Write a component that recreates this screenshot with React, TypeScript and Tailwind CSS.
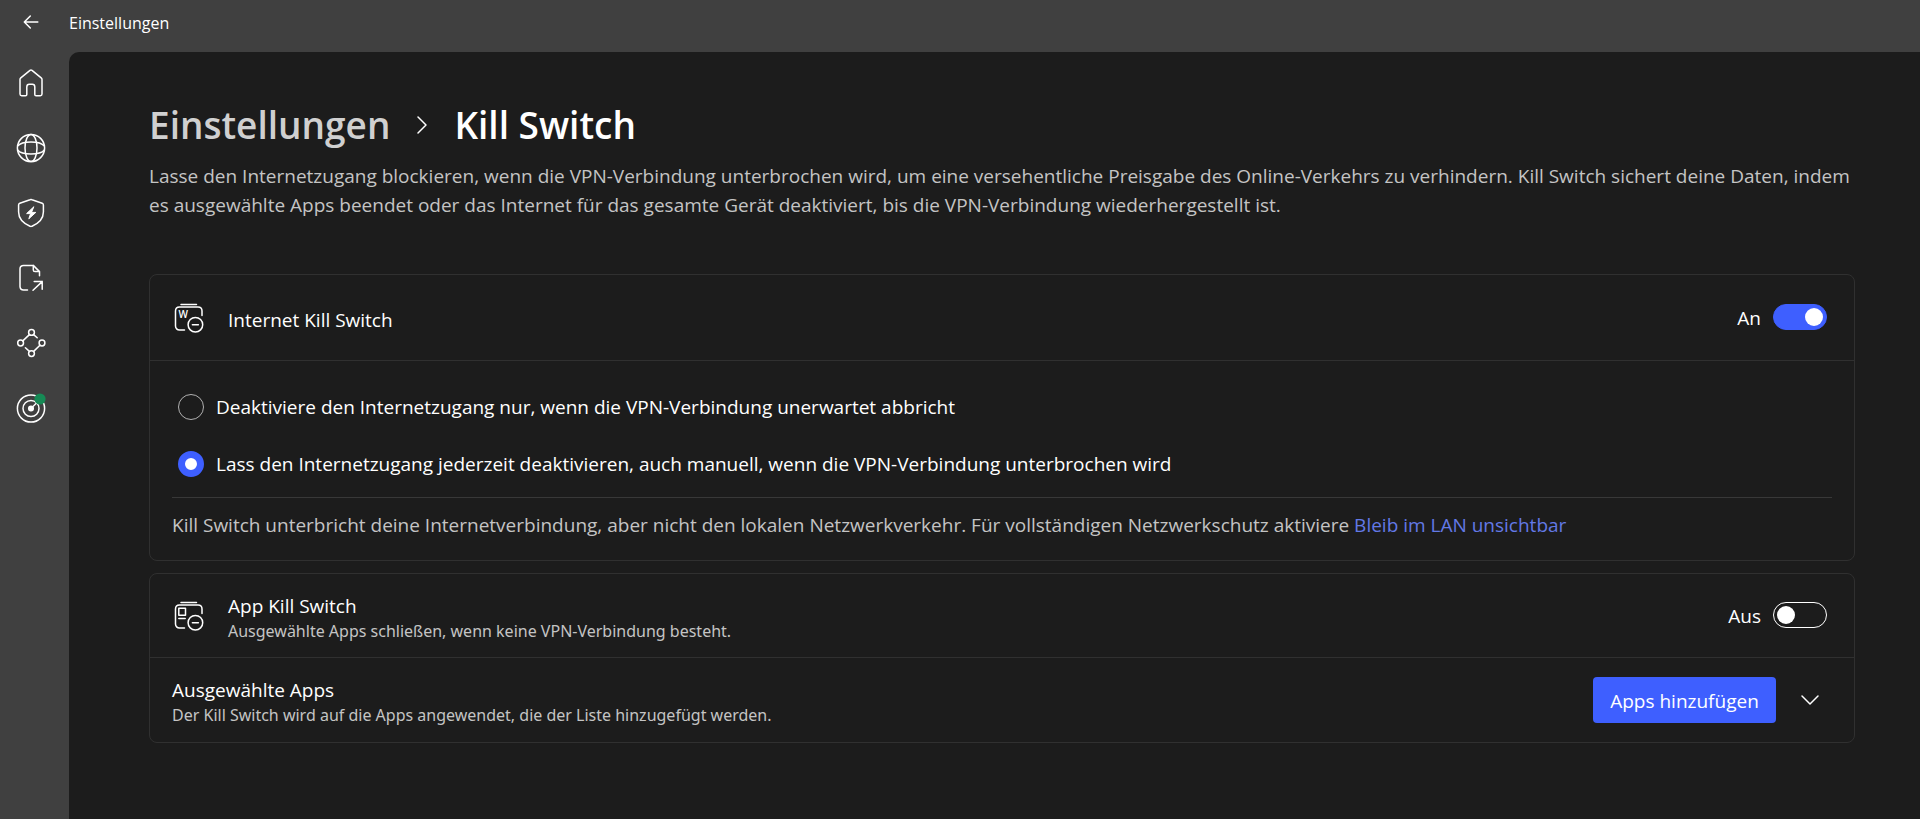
import React, { useState } from 'react';

interface IconProps {
  className?: string;
}

const stroke = {
  fill: 'none',
  stroke: 'currentColor',
  strokeWidth: 1.5,
  strokeLinecap: 'round' as const,
  strokeLinejoin: 'round' as const,
};

const BackIcon: React.FC<IconProps> = ({ className }) => (
  <svg viewBox="0 0 16 16" className={className} {...stroke}>
    <path d="M14.8 8H1.5M7.3 2 1.3 8l6 6" />
  </svg>
);

const HomeIcon: React.FC<IconProps> = ({ className }) => (
  <svg viewBox="0 0 30 30" className={className} {...stroke}>
    <path d="M14 2.4 4.8 9.9Q4 10.6 4 11.6V26c0 1 .7 1.7 1.7 1.7h3.8c.8 0 1.3-.5 1.3-1.3v-7.5c0-1.7.9-2.7 2.5-2.7h3c1.6 0 2.5 1 2.5 2.7v7.5c0 .8.5 1.3 1.3 1.3h4.2c1 0 1.7-.7 1.7-1.7V11.6Q26 10.6 25.2 9.9L16 2.4Q15 1.6 14 2.4Z" />
  </svg>
);

const GlobeIcon: React.FC<IconProps> = ({ className }) => (
  <svg viewBox="0 0 30 30" className={className} {...stroke}>
    <circle cx="15" cy="15" r="13.6" />
    <ellipse cx="15" cy="15" rx="6" ry="13.6" />
    <path d="M1.6 13C4 10 9 8.9 15 8.9S26 10 28.4 13M1.6 17C4 20 9 21.1 15 21.1S26 20 28.4 17" />
  </svg>
);

const ShieldIcon: React.FC<IconProps> = ({ className }) => (
  <svg viewBox="0 0 30 30" className={className} {...stroke}>
    <path d="M14 1.7Q15 1.3 16 1.7L26.2 5.2Q27.4 5.6 27.4 6.9V14c0 6.5-3.6 10.8-11.4 14.2Q15 28.7 14 28.2C6.2 24.8 2.6 20.5 2.6 14V6.9Q2.6 5.6 3.8 5.2Z" />
    <path d="M17.6 9 10.6 15.6h4L12.8 20.8 19.8 14.4h-4Z" fill="currentColor" strokeWidth="1" />
  </svg>
);

const FileShareIcon: React.FC<IconProps> = ({ className }) => (
  <svg viewBox="0 0 30 30" className={className} {...stroke}>
    <path d="M11.5 27H7.5C5.4 27 4 25.7 4 23.6V5.8c0-2 1.4-3.4 3.5-3.4h9.8L23.5 8.6v4.2" />
    <path d="M17.3 2.6v4.3c0 1.1.6 1.7 1.7 1.7h4.3" />
    <path d="M17 27.2 26.2 18.6M18.2 18.5h8v7.8" />
  </svg>
);

const MeshIcon: React.FC<IconProps> = ({ className }) => (
  <svg viewBox="0 0 30 30" className={className} {...stroke}>
    <circle cx="15.5" cy="4.4" r="2.9" />
    <circle cx="4.6" cy="15" r="2.9" />
    <circle cx="26" cy="15" r="2.9" />
    <circle cx="15.5" cy="25.6" r="2.9" />
    <path d="M13.4 6.6 6.8 12.9M17.6 6.6l3.6 3.2M23.9 17.2l-6.2 6.2M13.4 23.4l-4-3.6" />
  </svg>
);

const TargetIcon: React.FC<IconProps> = ({ className }) => (
  <svg viewBox="0 0 30 30" className={className} {...stroke}>
    <circle cx="15" cy="15.5" r="13.6" />
    <circle cx="15" cy="15.5" r="8" />
    <circle cx="15" cy="15.5" r="2.3" fill="currentColor" />
    <path d="M16 14.5 22 8.5" />
    <circle cx="24" cy="6" r="5.6" fill="#168a55" stroke="none" />
  </svg>
);

// Window outline with the minus badge, shared by both kill switch icons
const WindowIcon: React.FC<IconProps & { children: React.ReactNode }> = ({ className, children }) => (
  <svg viewBox="0 0 30 30" className={className} {...stroke}>
    <path d="M7 1.5h15.5" />
    <path d="M10.5 27H5.5C3.2 27 1.5 25.3 1.5 23V8c0-2.3 1.7-4 4-4h18.5c2.3 0 4 1.7 4 4v4.5" />
    {children}
    <circle cx="21.4" cy="21.7" r="7.3" />
    <path d="M18.4 21.7h6" />
  </svg>
);

const NAV_ITEMS = [
  { label: 'Start', Icon: HomeIcon },
  { label: 'Standorte', Icon: GlobeIcon },
  { label: 'Bedrohungsschutz', Icon: ShieldIcon },
  { label: 'Dateifreigabe', Icon: FileShareIcon },
  { label: 'Meshnet', Icon: MeshIcon },
  { label: 'Monitor', Icon: TargetIcon },
];

const MODES = [
  { value: 'unexpected', label: 'Deaktiviere den Internetzugang nur, wenn die VPN-Verbindung unerwartet abbricht' },
  { value: 'always', label: 'Lass den Internetzugang jederzeit deaktivieren, auch manuell, wenn die VPN-Verbindung unterbrochen wird' },
];

interface ToggleProps {
  name: string;
  checked: boolean;
  onChange: (checked: boolean) => void;
}

const Toggle: React.FC<ToggleProps> = ({ name, checked, onChange }) => (
  <label className="flex shrink-0 items-center gap-3 pb-0.5 text-[19px] leading-7">
    <span className="pt-0.5">{checked ? 'An' : 'Aus'}</span>
    <input
      type="checkbox"
      role="switch"
      aria-label={name}
      checked={checked}
      onChange={e => onChange(e.target.checked)}
      className="flex h-[26px] w-[54px] appearance-none items-center rounded-full border border-white px-[3px] before:size-[18px] before:rounded-full before:bg-white checked:justify-end checked:border-[#3e5fff] checked:bg-[#3e5fff]"
    />
  </label>
);

export default function App() {
  const [internetOn, setInternetOn] = useState(true);
  const [appOn, setAppOn] = useState(false);
  const [mode, setMode] = useState('always');

  return (
    <div className="flex min-h-screen flex-col bg-[#404040] font-['Open_Sans',sans-serif] text-white">
      {/* Title bar */}
      <header className="flex h-[52px] items-center">
        <button aria-label="Zurück" className="flex w-[69px] justify-center pr-[7px] pb-2">
          <BackIcon className="size-4" />
        </button>
        <span className="pb-1.5 text-base">Einstellungen</span>
      </header>

      <div className="flex flex-1">
        <nav className="-mt-0.5 flex w-[69px] shrink-0 flex-col">
          {NAV_ITEMS.map(({ label, Icon }) => (
            <a key={label} href="#" aria-label={label} className="flex h-[65px] items-center justify-center pr-[7px]">
              <Icon className="size-[30px]" />
            </a>
          ))}
        </nav>

        <main className="min-w-0 flex-1 rounded-tl-[10px] bg-[#1c1c1c] pt-11 pr-[65px] pl-20">
          <h1 className="flex items-center text-[37px] leading-[58px] font-semibold">
            <a href="#" className="text-[#d0d0d0]">Einstellungen</a>
            <svg viewBox="0 0 12 20" className="mx-[26px] h-5 w-3" {...stroke}>
              <path d="M2 2l8 8-8 8" />
            </svg>
            <span>Kill Switch</span>
          </h1>
          <p className="mt-2 text-[19px] leading-[29px] text-[#c4c4c4]">
            Lasse den Internetzugang blockieren, wenn die VPN-Verbindung unterbrochen wird, um eine versehentliche
            Preisgabe des Online-Verkehrs zu verhindern. Kill Switch sichert deine Daten, indem es ausgewählte Apps
            beendet oder das Internet für das gesamte Gerät deaktiviert, bis die VPN-Verbindung wiederhergestellt ist.
          </p>

          {/* Internet kill switch */}
          <section className="mt-[54px] rounded-lg border border-[#303030]">
            <div className="flex h-[86px] items-center border-b border-[#303030] pr-[27px] pl-6">
              <WindowIcon className="size-[30px] shrink-0">
                <text x="4.6" y="14.6" fontSize="10" fontWeight="600" fill="currentColor" stroke="none">W</text>
              </WindowIcon>
              <h2 className="ml-6 flex-1 pt-1 text-[19px] leading-7">Internet Kill Switch</h2>
              <Toggle name="Internet Kill Switch" checked={internetOn} onChange={setInternetOn} />
            </div>
            <div className="px-[22px] pt-[30px] pb-5">
              {MODES.map(m => (
                <label key={m.value} className="mb-[26px] flex items-center gap-3 pl-1.5 text-[19px] leading-[29px]">
                  <input
                    type="radio"
                    name="mode"
                    value={m.value}
                    checked={mode === m.value}
                    onChange={() => setMode(m.value)}
                    className="size-[26px] shrink-0 appearance-none rounded-full border border-[#b0b0b0] checked:border-[7px] checked:border-[#3e5fff] checked:bg-white"
                  />
                  <span className="pt-0.5">{m.label}</span>
                </label>
              ))}
              <p className="-mt-2 border-t border-[#383838] pt-[13px] text-[19px] leading-[29px] text-[#c4c4c4]">
                Kill Switch unterbricht deine Internetverbindung, aber nicht den lokalen Netzwerkverkehr. Für
                vollständigen Netzwerkschutz aktiviere <a href="#" className="text-[#6379e6]">Bleib im LAN unsichtbar</a>
              </p>
            </div>
          </section>

          {/* App kill switch */}
          <section className="mt-3 mb-10 rounded-lg border border-[#303030]">
            <div className="flex h-[84px] items-center border-b border-[#303030] pr-[27px] pl-6">
              <WindowIcon className="size-[30px] shrink-0">
                <path d="M4.8 7.3h6.7v6.9H4.8ZM4.8 17.6h6.4" />
              </WindowIcon>
              <div className="ml-6 flex-1 pt-1">
                <h2 className="text-[19px] leading-[26px]">App Kill Switch</h2>
                <p className="font-['Noto_Sans',sans-serif] text-base text-[#c4c4c4]">
                  Ausgewählte Apps schließen, wenn keine VPN-Verbindung besteht.
                </p>
              </div>
              <Toggle name="App Kill Switch" checked={appOn} onChange={setAppOn} />
            </div>
            <div className="flex h-[84px] items-center pr-[34px] pl-[22px]">
              <div className="flex-1 pt-1">
                <h2 className="text-[19px] leading-[26px]">Ausgewählte Apps</h2>
                <p className="font-['Noto_Sans',sans-serif] text-base text-[#c4c4c4]">
                  Der Kill Switch wird auf die Apps angewendet, die der Liste hinzugefügt werden.
                </p>
              </div>
              <button className="h-[46px] w-[183px] rounded bg-[#3e5fff] pt-0.5 text-[19px]">Apps hinzufügen</button>
              <button aria-label="Liste anzeigen" className="ml-6">
                <svg viewBox="0 0 20 12" className="h-3 w-5" {...stroke}>
                  <path d="M2 2l8 8 8-8" />
                </svg>
              </button>
            </div>
          </section>
        </main>
      </div>
    </div>
  );
}
